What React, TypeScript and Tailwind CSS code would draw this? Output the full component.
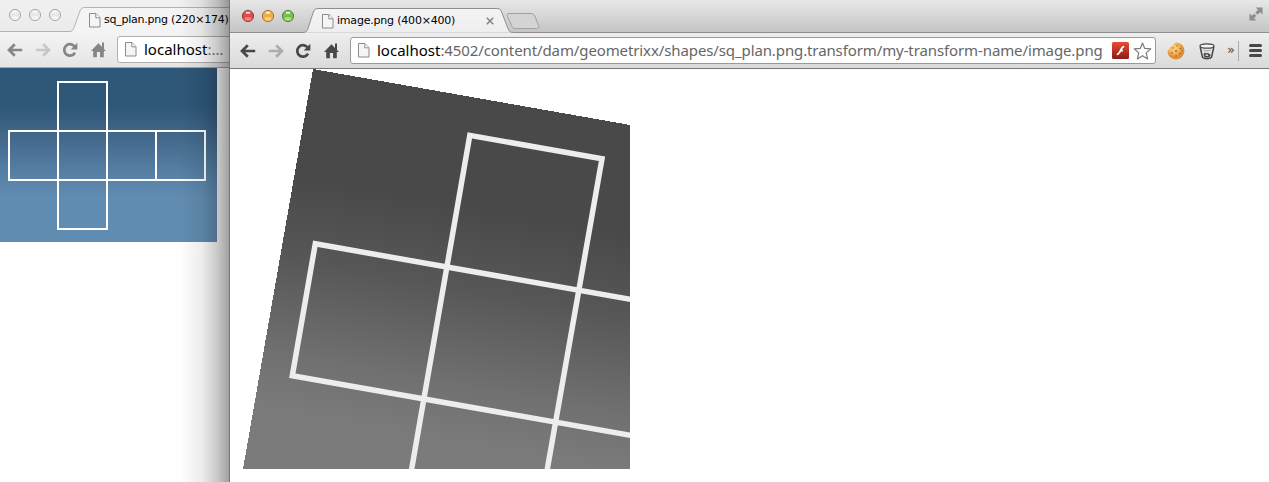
import React from "react";

const PageIcon = ({ className = "" }: { className?: string }) => (
  <svg width="12" height="15" viewBox="0 0 12 15" className={`shrink-0 ${className}`}>
    <path d="M.5.5h6.500l4 4.200v9.300H.5z" fill="#f5f5f5" stroke="#8b8b8b" />
    <path d="M6.800.8v4h4" fill="#fff" stroke="#8b8b8b" />
  </svg>
);

const Back = () => (
  <svg width="16" height="14" viewBox="0 0 16 14" className="shrink-0">
    <path d="M7.800 1.200 2 7l5.800 5.800M2.500 7h12.700" fill="none" stroke="currentColor" strokeWidth="2.7" />
  </svg>
);

const Forward = () => (
  <svg width="16" height="14" viewBox="0 0 16 14" className="shrink-0 opacity-35">
    <path d="M8.200 1.200 14 7l-5.800 5.800M13.500 7H.8" fill="none" stroke="currentColor" strokeWidth="2.7" />
  </svg>
);

const Reload = () => (
  <svg width="16" height="16" viewBox="0 0 16 16" className="-ml-px mr-px shrink-0">
    <path d="M12.300 4.200A5.700 5.700 0 1 0 13 10.600" fill="none" stroke="currentColor" strokeWidth="2.700" />
    <path d="M15.300.8v6.700H8.700z" fill="currentColor" />
  </svg>
);

const Home = () => (
  <svg width="15" height="16" viewBox="0 0 15 16" className="shrink-0">
    <path d="M7.500 1.300 0 9h2.200v6.300h3.700V10h3.200v5.300h3.700V9H15l-2-2.100V.5h-2v4.400z" fill="currentColor" />
  </svg>
);

const NavButtons = () => (
  <>
    <Back />
    <Forward />
    <Reload />
    <Home />
  </>
);

const Lights = ({ active }: { active?: boolean }) => {
  const colors = active
    ? [["#df4b4b", "#ffaaa8", "#a03a3a"], ["#f2ad42", "#ffe9a0", "#a87430"], ["#79bd4c", "#d4f4a8", "#54853a"]]
    : [["#e8e8e8", "#fbfbfb", "#aaa"], ["#e8e8e8", "#fbfbfb", "#aaa"], ["#e8e8e8", "#fbfbfb", "#aaa"]];
  return (
    <svg width="54" height="14" viewBox="0 0 54 14" className="shrink-0">
      {colors.map(([base, light, edge], i) => (
        <g key={i}>
          <circle cx={7 + i * 20} cy="7" r="5.600" fill={base} stroke={edge} strokeWidth="1" />
          <ellipse cx={7 + i * 20} cy="9.800" rx="3.500" ry="1.900" fill={light} opacity=".6" />
          <ellipse cx={7 + i * 20} cy="3.800" rx="2.500" ry="1.300" fill="#fff" opacity=".7" />
        </g>
      ))}
    </svg>
  );
};

const CubePlan = () => (
  <svg width="217" height="174" viewBox="0 0 217 174" className="block">
    <defs>
      <linearGradient id="sky" x1="0" y1="0" x2="0" y2="1">
        <stop offset=".22" stopColor="#2f5778" />
        <stop offset=".38" stopColor="#416789" />
        <stop offset=".62" stopColor="#5781a6" />
        <stop offset=".74" stopColor="#618cb1" />
      </linearGradient>
    </defs>
    <rect width="217" height="174" fill="url(#sky)" />
    <path d="M58 14h49v147H58zM9 63h196v49H9zM156 63v49" fill="none" stroke="#fff" strokeWidth="2" />
  </svg>
);

const RotatedPlan = () => (
  <svg width="387" height="400" viewBox="243 69 387 400" className="block">
    <defs>
      <linearGradient id="grey" gradientUnits="userSpaceOnUse" x1="294" y1="175" x2="253" y2="409">
        <stop offset="0" stopColor="#494949" />
        <stop offset=".35" stopColor="#575757" />
        <stop offset=".75" stopColor="#707070" />
        <stop offset="1" stopColor="#7b7b7b" />
      </linearGradient>
    </defs>
    <path d="M313 69 630 125V469H243z" fill="url(#grey)" shapeRendering="crispEdges" />
    <path
      d="M406 501.500 469.800 135.400 602 158.700 541.600 501.500M647 302.300 315.300 243.800 292.300 375.800 647 438.200"
      fill="none"
      stroke="#ededed"
      strokeWidth="5.500"
    />
  </svg>
);

const Flash = () => (
  <svg width="17" height="17" viewBox="0 0 17 17" className="shrink-0">
    <defs>
      <linearGradient id="flash" x1="0" y1="0" x2="0" y2="1">
        <stop offset="0" stopColor="#ed4a35" />
        <stop offset="1" stopColor="#8c1c16" />
      </linearGradient>
    </defs>
    <rect width="17" height="17" rx="1.500" fill="url(#flash)" />
    <path d="M12.200 4.700C8.500 4.500 8.800 12.300 4.800 12.300M7.700 8.600h3.200" fill="none" stroke="#fff" strokeWidth="1.700" />
  </svg>
);

const Star = () => (
  <svg width="19" height="18" viewBox="0 0 19 18" className="shrink-0">
    <path
      d="m9.500 1 2.200 5.400 6.100.5-4.600 4 1.400 6-5.100-3.200-5.100 3.200 1.400-6-4.600-4 6.100-.5z"
      fill="#fff"
      stroke="#7b7b7b"
      strokeWidth="1.200"
      strokeLinejoin="round"
    />
  </svg>
);

const Cookie = () => (
  <svg width="18" height="18" viewBox="0 0 18 18" className="shrink-0">
    <defs>
      <radialGradient id="cookie" cx=".4" cy=".35">
        <stop offset="0" stopColor="#ffd680" />
        <stop offset=".6" stopColor="#f4b455" />
        <stop offset="1" stopColor="#dc9038" />
      </radialGradient>
    </defs>
    <path d="M9 .5c4.700-.1 8.400 3.500 8.400 8.300S13.700 17.400 9 17.400.6 14 .6 9.300c1-.6.6-1.500 1.500-2.100.8-.6.5-1.600 1.300-2.300.7-.5 1.500-.3 2-1C6.200 3 7.500 1 9 .5z" fill="url(#cookie)" />
    <g fill="#94612a">
      <circle cx="6" cy="6" r=".8" /><circle cx="10" cy="3.800" r=".7" /><circle cx="13.500" cy="6.500" r=".8" />
      <circle cx="9" cy="9" r=".9" /><circle cx="5" cy="11" r=".8" /><circle cx="13" cy="11.500" r=".8" />
      <circle cx="9" cy="14" r=".8" /><circle cx="15" cy="9" r=".6" />
    </g>
  </svg>
);

const Bucket = () => (
  <svg width="16" height="18" viewBox="0 0 16 18" className="shrink-0" fill="none" stroke="#484848">
    <ellipse cx="8" cy="4" rx="7" ry="2.200" fill="#f6f6f6" strokeWidth="1.300" />
    <path d="m1.200 5 2.300 10.300c1.700 1.800 7.300 1.800 9 0L14.800 5" strokeWidth="1.500" />
    <path d="M4.300 8.300c2 .7 5.400.7 7.400 0" stroke="#aaa" />
    <path d="M4.800 12c.7-1.200 1.700-1.400 2.300-.2.800-.7 2.200-.7 3 .3l1.300.7-.8 1.900c-1.500.7-3.900.7-5.200 0z" fill="#484848" strokeWidth=".6" />
    <ellipse cx="7.800" cy="13.300" rx="1.500" ry=".7" fill="#eee" stroke="none" />
  </svg>
);

const FullScreen = () => (
  <svg width="14" height="14" viewBox="0 0 15 15" className="shrink-0" fill="#8e8e8e">
    <path d="M7 .5h7.500V8L12 5.500 9 8.300 6.700 6l3-3zM8 14.500H.5V7L3 9.500l2.500-2.400 2.300 2.300L5.400 12z" />
  </svg>
);

const tabText = "whitespace-nowrap font-['DejaVu_Sans','Noto_Sans',sans-serif] text-[11px] leading-[14px] text-black";
const urlText = "whitespace-nowrap font-['Noto_Sans','Open_Sans',sans-serif] text-[15px] leading-[20px] -mt-[2px]";

export default function App() {
  return (
    <div className="flex h-[482px] w-full overflow-hidden bg-white">
      <section className="relative flex w-[229px] shrink-0 flex-col overflow-hidden">
        <header className="grid h-8 w-[229px] bg-gradient-to-b from-[#f6f6f6] to-[#e9e9e9]">
          <svg width="229" height="32" className="col-start-1 row-start-1">
            <path d="M0 31.500H69c3 0 4-1 5-4L80 11c1-2.500 2-3.500 5-3.500H229V32H0z" fill="#f4f4f4" stroke="none" />
            <path d="M0 0H229V7H85c-3 0-4 1-5 3.500L74 27.500c-1 3-2 4-5 4H0z" fill="#ededed" fillOpacity=".6" />
            <path d="M0 31.500H69c3 0 4-1 5-4L80 11c1-2.500 2-3.500 5-3.500H229" fill="none" stroke="#b3b3b3" />
          </svg>
          <div className="col-start-1 row-start-1 flex items-start pl-2 pt-2">
            <Lights />
            <PageIcon className="ml-[27px] mt-[5px]" />
            <span className={`${tabText} ml-[3px] mt-[5px] tracking-[-0.25px]`}>sq_plan.png (220×174)</span>
          </div>
        </header>
        <div className="flex h-9 items-center gap-3 border-b border-[#a5a5a5] bg-gradient-to-b from-[#f4f4f4] to-[#e5e5e5] pl-[7px] text-[#858585]">
          <NavButtons />
          <div className="-ml-px flex h-[27px] w-[130px] shrink-0 items-center rounded-[3px] border border-[#b0b0b0] bg-white pl-[7px]">
            <PageIcon />
            <span className={`${urlText} ml-[7px] text-black`}>localhost<span className="text-[#777]">:…</span></span>
          </div>
        </div>
        <CubePlan />
        <div className="absolute inset-y-0 right-0 w-[50px] bg-[linear-gradient(to_right,transparent,rgba(0,0,0,.07)_45%,rgba(0,0,0,.22)_78%,rgba(0,0,0,.37))]" />
      </section>
      <section className="flex min-w-0 flex-1 flex-col border-l border-[#777] bg-white">
        <header className="grid h-[33px] bg-gradient-to-b from-[#e7e7e7] to-[#c4c4c4]">
          <svg width="1039" height="33" viewBox="230 0 1039 33" className="col-start-1 row-start-1">
            <defs>
              <linearGradient id="tab" x1="0" y1="0" x2="0" y2="1">
                <stop stopColor="#f4f4f4" /><stop offset="1" stopColor="#eee" />
              </linearGradient>
            </defs>
            <path d="M230 32.500H302c4 0 5-1 6-4L313 13c1-3 2-4.500 5-4.500H497c3 0 4 1.500 5 4.500l6 15.500c1 3 2 4 6 4z" fill="url(#tab)" />
            <path d="M230 32.500H302c4 0 5-1 6-4L313 13c1-3 2-4.500 5-4.500H497c3 0 4 1.500 5 4.500l6 15.500c1 3 2 4 6 4H1269" fill="none" stroke="#8f8f8f" />
            <path d="M509 13.500h22c2 0 3 1 4 3l3.500 9c1 2 0 3-2 3h-21c-2 0-3-1-4-3l-4-9c-.8-2 0-3 1.500-3z" fill="#d4d4d4" stroke="#a0a0a0" />
          </svg>
          <div className="col-start-1 row-start-1 flex items-start pl-[11px] pr-[6px] pt-[9px]">
            <Lights active />
            <PageIcon className="ml-[27px] mt-[5px]" />
            <span className={`${tabText} ml-[3px] mt-[5px] w-[118px] tracking-[-0.2px]`}>image.png (400×400)</span>
            <svg width="8" height="8" viewBox="0 0 8 8" className="ml-[31px] mt-[8px]">
              <path d="m.8.8 6.400 6.400m0-6.400L.8 7.200" stroke="#858585" strokeWidth="1.600" />
            </svg>
            <div className="-mt-[2px] ml-auto"><FullScreen /></div>
          </div>
        </header>
        <div className="flex h-9 items-center border-b border-[#777] bg-gradient-to-b from-[#eee] to-[#dadada] pl-[10px] pr-[7px] text-[#484848]">
          <div className="flex items-center gap-3">
            <NavButtons />
          </div>
          <div className="ml-[11px] flex h-[27px] w-[806px] shrink-0 items-center rounded-[3px] border border-[#999] bg-white pl-[7px] pr-[3px]">
            <PageIcon />
            <span className={`${urlText} ml-[7px] tracking-[-0.11px] text-[#666]`}>
              <span className="tracking-normal text-black">localhost</span>:4502/content/dam/geometrixx/shapes/sq_plan.png.transform/my-transform-name/image.png
            </span>
            <div className="ml-auto flex items-center gap-1"><Flash /><Star /></div>
          </div>
          <div className="ml-[11px]"><Cookie /></div>
          <div className="ml-[14px]"><Bucket /></div>
          <span className="-mt-px ml-[12px] font-['DejaVu_Sans',sans-serif] text-[13px] leading-4">»</span>
          <div className="ml-auto h-5 w-px bg-[#aaa]" />
          <div className="ml-[10px] flex w-[13px] flex-col gap-[2px]">
            <div className="h-[3px] rounded-sm bg-[#484848]" />
            <div className="h-[3px] rounded-sm bg-[#484848]" />
            <div className="h-[3px] rounded-sm bg-[#484848]" />
          </div>
        </div>
        <div className="pl-[13px]">
          <RotatedPlan />
        </div>
      </section>
    </div>
  );
}
